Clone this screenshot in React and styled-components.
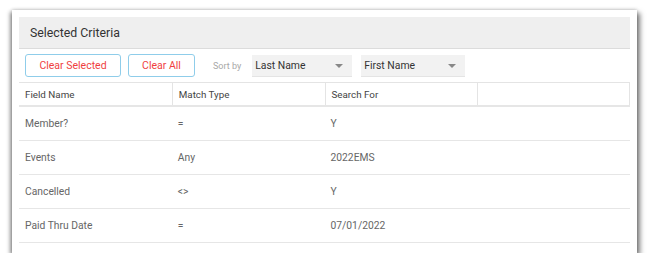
import React from "react";
import styled, { createGlobalStyle } from "styled-components";

const GlobalStyle = createGlobalStyle`
  html, body {
    margin: 0;
    padding: 0;
    background: #ffffff;
  }
  body {
    font-family: Roboto, "Liberation Sans", Arial, sans-serif;
  }
`;

const columns = ["Field Name", "Match Type", "Search For", ""];

const rows = [
  ["Member?", "=", "Y"],
  ["Events", "Any", "2022EMS"],
  ["Cancelled", "<>", "Y"],
  ["Paid Thru Date", "=", "07/01/2022"],
];

const Caret = () => (
  <svg width="8" height="4" viewBox="0 0 8 4">
    <path d="M0 0 L8 0 L4 4 Z" fill="#888" />
  </svg>
);

const App = () => {
  return (
    <>
      <GlobalStyle />
      <Card>
        <Panel>
          <Header>Selected Criteria</Header>

          <Toolbar>
            <ActionButton $width={96}>Clear Selected</ActionButton>
            <ActionButton $width={67}>Clear All</ActionButton>
            <SortLabel>Sort by</SortLabel>
            <Select $width={100}>
              <span>Last Name</span>
              <Caret />
            </Select>
            <Select $width={104}>
              <span>First Name</span>
              <Caret />
            </Select>
          </Toolbar>

          <HeadRow>
            {columns.map((item, index) => (
              <HeadCell key={index} $last={index === columns.length - 1}>
                {item}
              </HeadCell>
            ))}
          </HeadRow>

          {rows.map((row, index) => (
            <Row key={index}>
              {row.map((cell, i) => (
                <Cell key={i}>{cell}</Cell>
              ))}
              <Cell />
            </Row>
          ))}
        </Panel>
      </Card>
    </>
  );
};

export default App;

const Card = styled.div`
  margin: 10px 0 0 12px;
  width: 625px;
  height: 243px;
  box-sizing: border-box;
  padding: 7px 7px 0 7px;
  background: #fff;
  box-shadow: 3px 3px 5px rgba(0, 0, 0, 0.5), -2px 2px 4px rgba(0, 0, 0, 0.4),
    0 -1px 3px rgba(0, 0, 0, 0.12);
`;

const Panel = styled.div`
  width: 611px;
`;

const Header = styled.div`
  height: 32px;
  box-sizing: border-box;
  display: flex;
  align-items: center;
  padding: 1px 11px 0;
  background: #efefef;
  border-bottom: 1px solid #dcdcdc;
  font-size: 12.3px;
  color: #333;
`;

const Toolbar = styled.div`
  display: flex;
  align-items: center;
  height: 33px;
  padding-left: 6px;
  gap: 7px;
`;

const ActionButton = styled.button`
  width: ${(p) => p.$width}px;
  height: 23px;
  box-sizing: border-box;
  border: 1px solid #8fcdea;
  border-radius: 3px;
  background: #fff;
  color: #ef3f3f;
  font-family: inherit;
  font-size: 10.5px;
  padding: 0;
  cursor: pointer;
`;

const SortLabel = styled.span`
  margin-left: 11px;
  margin-right: 4px;
  font-size: 9px;
  color: #a8a8a8;
`;

const Select = styled.div`
  width: ${(p) => p.$width}px;
  height: 22px;
  box-sizing: border-box;
  display: flex;
  align-items: center;
  justify-content: space-between;
  padding: 0 9px 0 3px;
  margin-right: 2px;
  background: #f2f2f2;
  border-bottom: 1px solid #e4e4e4;
  font-size: 10.4px;
  color: #333;

  svg {
    margin-top: 2px;
  }
`;

const HeadRow = styled.div`
  display: grid;
  grid-template-columns: repeat(4, 1fr);
  height: 25px;
  box-sizing: border-box;
  border-top: 1px solid #e4e4e4;
  border-bottom: 2px solid #e6e6e6;
`;

const HeadCell = styled.div`
  display: flex;
  align-items: center;
  padding-left: 6px;
  font-size: 9.8px;
  color: #444;
  border-left: 1px solid #e4e4e4;
  ${(p) => p.$last && "border-right: 1px solid #e4e4e4;"}

  &:first-child {
    border-left: none;
  }
`;

const Row = styled.div`
  display: grid;
  grid-template-columns: repeat(4, 1fr);
  height: 34px;
  box-sizing: border-box;
  border-bottom: 1px solid #e6e6e6;
`;

const Cell = styled.div`
  display: flex;
  align-items: center;
  padding-left: 6px;
  font-size: 10.3px;
  color: #666;
`;
